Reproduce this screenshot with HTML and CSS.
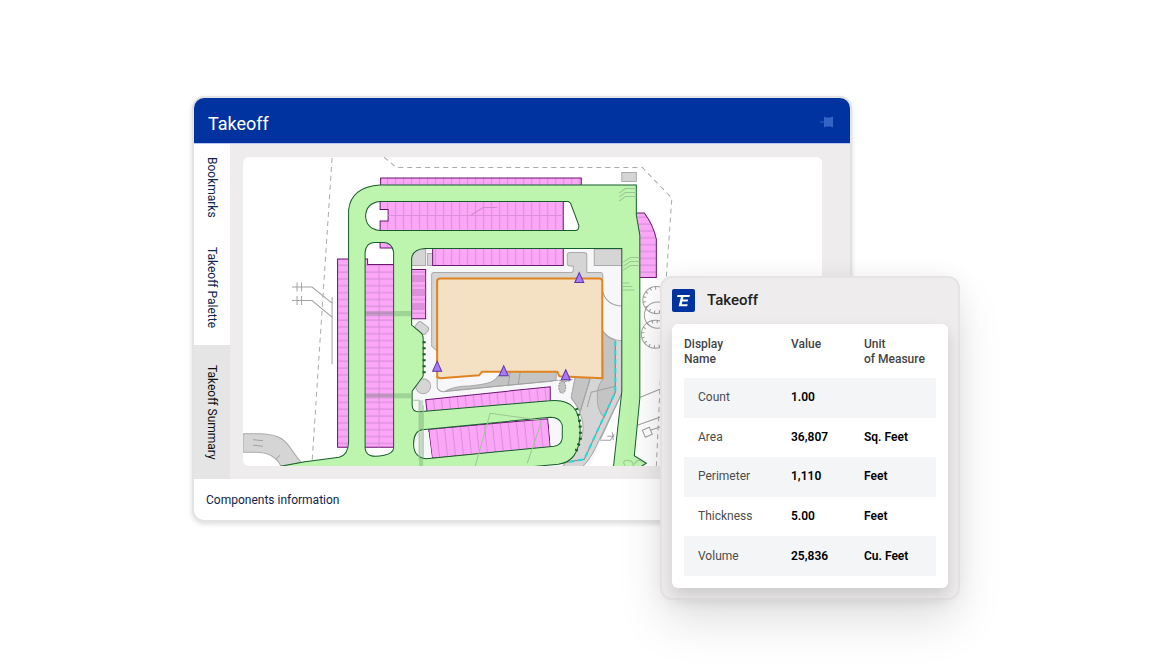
FILE: index.html
```html
<!DOCTYPE html>
<html lang="en">
<head>
<meta charset="utf-8">
<title>Takeoff</title>
<link rel="stylesheet" href="styles.css">
</head>
<body>
<main class="stage">
  <section class="window">
    <header class="titlebar">
      <h1 class="title">Takeoff</h1>
      <button class="pin" aria-label="Pin panel">
        <svg viewBox="0 0 14 12" width="14" height="12"><path d="M0 5.500h4V.5l2 1h4l3-1v11l-3-1H6l-2 1V6.500H0z"/></svg>
      </button>
    </header>
    <div class="workspace">
      <nav class="tabs">
        <button class="tab tab-bookmarks">Bookmarks</button>
        <button class="tab tab-palette">Takeoff Palette</button>
        <button class="tab tab-summary">Takeoff Summary</button>
      </nav>
      <div class="canvas">
        <svg class="plan" viewBox="243 157 579 309" preserveAspectRatio="xMinYMin slice" role="img" aria-label="Site plan">
          <defs>
            <pattern id="cols" x="380" y="0" width="8" height="60" patternUnits="userSpaceOnUse"><path class="stall-bg" d="M0 0h8v60H0z"/><path class="stall-line" d="M7.500 0v60"/></pattern>
            <pattern id="rows" x="0" y="266" width="60" height="6.850" patternUnits="userSpaceOnUse"><path class="stall-bg" d="M0 0h60v7H0z"/><path class="stall-line" d="M0 6h60"/></pattern>
            <pattern id="slant" x="429" y="0" width="8" height="60" patternUnits="userSpaceOnUse" patternTransform="rotate(-6 429 430)"><path class="stall-bg" d="M0 0h8v60H0z"/><path class="stall-line" d="M7.500 0v60"/></pattern>
          </defs>

          <!-- property boundary and utilities -->
          <g class="boundary">
            <path d="M332 158L312 462"/>
            <path d="M384 157L396 167.500H642L671.500 198L666 277M660 380L656 466"/>
          </g>
          <g class="line">
            <path d="M292 287H312L332 303M292 300.500H312L332 317M332 297V364M297 282.500v9M301.500 282.500v9M297 296v9M301.500 296v9"/>
            <path d="M640 397L662 388M637 425L662 416M650 430L662 426"/>
            <path d="M642 430l7-3 3 7-7 3z"/>
            <circle cx="656" cy="300" r="13.500"/><circle cx="657" cy="315" r="13"/><circle cx="655" cy="334" r="14"/>
          </g>
          <g class="ticks"><circle cx="656" cy="300" r="12"/><circle cx="655" cy="334" r="12.500"/></g>
          <path class="paved" d="M243 433.500H260C288 434 287 446 301 462L281 466C276 456 267 452 256 452H243z"/>
          <path class="line" d="M253 439.500l10 1M253 445l10 1M276 459l4-4"/>
          <path class="paved" d="M621.500 172.500h14.500v9h-14.500z"/>

          <!-- building island -->
          <path class="island" d="M411 248H622V392L590 466H540L580 440 575 402 411 412z"/>
          <path class="paved" d="M411 249h14.500v16.500H411zM427.500 253.500H433v12h-5.500zM594 249h28v16.500h-28z"/>
          <path class="paved" d="M437 351L431.500 346V275Q431.500 272.500 434 272.500H571Q573 272.500 573 270V266H570Q567 266 567 263V255Q567 252.500 570 252.500H583.500Q586.500 252.500 586.500 255V272.500H600Q602.500 272.500 602.500 276V280H437z"/>
          <path class="paved" d="M602 330Q608 340 622 340.500V392L593 452Q586 465 577 470H560L580 440C588 424 577 405 571 398L575 376H602z"/>
          <path class="paved-dark" d="M602 330Q607 338 615 340V392L604 417Q596 410 597 394Q597 386 603 378z"/>
          <path class="paved-dark" d="M575 377L590 378L580 411L571 397z"/>
          <path class="paved-dark" d="M445 391Q449 388 462 386Q492 385 497 377L503 371H556V378Q556 380 551 381z"/>
          <path class="line" d="M437 377V387Q438 391 443 391.500L558 380M508 385l2-13M518 384l2-12M602 290Q605 305 622 306M587 407L591 392L615 386"/>
          <path class="line" d="M622 392L600 439M600 440h10l4-6M607 436l7 0M612 432l1 8M590 378l-10 33"/>
          <circle class="paved" cx="423" cy="386" r="7.500"/>
          <rect class="paved" x="415" y="323" width="13" height="9" rx="3" transform="rotate(38 421 328)"/>
          <ellipse class="shrub" cx="562" cy="387" rx="3.500" ry="6"/>
          <path class="shrub" d="M559 380q8 3 13-1"/>
          <path class="water-base" d="M615 341V392L584 459L566 462"/>
          <path class="water" d="M615 341V392L584 459L566 462"/>

          <!-- parking -->
          <path fill="url(#cols)" class="parking" d="M380.500 178H581V187H380.500zM380 200H563V232H380V221H388V209.500H380zM380 239h13v9h-13zM432.500 248H563V265.500H432.500z"/>
          <path class="stall-line" d="M388 215.500H563"/>
          <path class="stall-light" d="M471 215L483 207.500H497"/>
          <path fill="url(#rows)" class="parking" d="M337.500 259H367.500V264.500H394V447H337.500zM411 269.500H425.500V318.500H411zM635 213H644Q653 225 656 239V277.500H637z"/>
          <path class="stall-line" d="M379 265V447"/>
          <path class="shade" d="M412 275h13v7h-13zM412 289h13v7h-13zM412 303h13v7h-13z"/>
          <path fill="url(#slant)" class="parking" d="M425.500 399.500L550 386.500V401L427 412zM428.500 429L547.500 418.500L550 447L432 458z"/>
          <path class="end-cap" d="M412 432h16.500L432 459H414zM548 416h16v30h-13.500z"/>

          <!-- driveway -->
          <path class="road" fill-rule="evenodd" d="M270 468L305 461.500L339 457Q348 455 348.500 442V210Q351 187 380 185H636V215L639.500 235V398L634 455.500L646 463L638 468H613L621.500 391V248.500H425Q413 249 411.500 258V325L420 332Q423 334 423 338V376L412 391V405Q412 411.500 419 411.500L549 400.500C572 398 580 410 580 432C579 453 572 462 558 464L515 468z
            M380 201.500H567Q570 201.500 571 205L578.500 225Q579 230.500 575 230.500H380Q366 229 365.500 216Q366 203 380 201.500z
            M365 252Q366 243 374 242.500H384Q392 243 393.500 252V448Q393 453 384 455Q366 459 365 448z
            M422 429.500L550 417Q560 417 562 425V438Q561 445 554 446L426 458.500Q414 457 413.500 445Q413 431 422 429.500z"/>
          <path class="crossing" d="M365 311h46v5h-46zM365 393h46v5h-46zM419 400h4v66h-4z"/>
          <path class="curb" d="M413 400h6v60M423 405v52M475 466L490 413L541 420M527 463L541 422"/>
          <path class="curb" d="M619 193L625 188.500H636M619 197L625 192.500H636M619 201L625 196.500H636M623 262L630 257.500H639M623 266L630 261.500H639M623 270L630 265.500H639M622 283h7M622 286.500h10M622 290h12M625 466q-4-6 2-6t6 6M634 464q4-7 8-2"/>
          <path class="bushes" d="M424 341V374M576 408Q581 420 580 440L575 453"/>

          <!-- building -->
          <path class="building" d="M440 278.500H599Q602 278.500 602 281.500V378L559 376L557 371.500H482L479 375L440 378L437 377V281.500Q437 278.500 440 278.500z"/>
          <path class="marker" d="M579 272.500l4.500 10h-9zM437 361l4.500 10h-9zM503.500 365.500l4.500 10h-9zM565.500 369.500l4.500 10h-9z"/>
        </svg>
      </div>
    </div>
    <footer class="statusbar">Components information</footer>
  </section>

  <section class="card">
    <header class="card-head">
      <svg class="logo" viewBox="0 0 23 23" width="23" height="23" aria-hidden="true"><rect width="23" height="23" rx="2"/><path d="M5.500 6H18l-.5 2H11.500l-.6 2.500h5.200l-.5 2h-5.200l-.7 2.700h6l-.5 2H6.700L8.900 8H5z"/></svg>
      <h2 class="card-title">Takeoff</h2>
    </header>
    <div class="sheet">
      <table class="measures">
        <thead><tr><th class="name">Display<br>Name</th><th class="value">Value</th><th>Unit<br>of Measure</th></tr></thead>
        <tbody>
          <tr><td>Count</td><td>1.00</td><td></td></tr>
          <tr><td>Area</td><td>36,807</td><td>Sq. Feet</td></tr>
          <tr><td>Perimeter</td><td>1,110</td><td>Feet</td></tr>
          <tr><td>Thickness</td><td>5.00</td><td>Feet</td></tr>
          <tr><td>Volume</td><td>25,836</td><td>Cu. Feet</td></tr>
        </tbody>
      </table>
    </div>
  </section>
</main>
</body>
</html>
```
FILE: styles.css
```css
* { box-sizing: border-box; }
body { margin: 0; background: #fff; font-family: Roboto, "Liberation Sans", sans-serif; }
button { border: 0; padding: 0; background: none; font: inherit; color: inherit; cursor: pointer; }

.stage {
  display: grid;
  grid-template-columns: minmax(0, 768px);
  justify-content: center;
  align-items: start;
  min-height: 100vh;
  padding-top: 96px;
}

.window {
  grid-area: 1 / 1;
  width: 86%;
  border: 2px solid #e3e3e6;
  border-radius: 12px;
  overflow: hidden;
  background: #fff;
  box-shadow: 0 2px 5px rgba(0, 0, 0, .14);
}
.titlebar {
  display: flex;
  align-items: center;
  justify-content: space-between;
  height: 46px;
  padding: 6px 16px 0 14px;
  background: #0033a0;
  border-bottom: 1px solid #b5c7ee;
  color: #fff;
}
.title { margin: 0; font-size: 18px; line-height: 24px; font-weight: 400; }
.pin { display: flex; margin-bottom: 4px; }
.pin path { fill: #3464c4; }

.workspace { display: flex; background: #eeeced; }
.tabs { display: flex; flex-direction: column; width: 36px; background: #fff; color: #10254f; }
.tab { writing-mode: vertical-rl; width: 36px; font-size: 12px; line-height: 36px; text-align: left; }
.tab-bookmarks { padding-top: 13px; height: 88px; }
.tab-palette { padding-top: 15px; height: 113px; }
.tab-summary { flex: 1; padding-top: 20px; background: #e5e5e5; color: #111; }
.canvas { flex: 1; min-width: 0; padding: 13px 28px 13px 13px; }
.plan { display: block; width: 100%; height: auto; border-radius: 6px; background: #fff; }
.statusbar { padding: 9px 12px 8px; font-size: 12px; line-height: 24px; color: #10254f; }

.boundary { fill: none; stroke: #aaa; stroke-width: 1; stroke-dasharray: 5 4; }
.line { fill: none; stroke: #a2a2a2; stroke-width: 1; }
.ticks { fill: none; stroke: #999; stroke-width: 3; stroke-dasharray: 1 4; }
.paved { fill: #d5d5d5; stroke: #aaa; }
.paved-dark { fill: #c4c4c4; stroke: #aaa; stroke-width: 1; }
.island { fill: #f7f7f9; }
.end-cap { fill: #f7f7f9; }
.shrub { fill: #c4c4c4; stroke: #999; stroke-dasharray: 2 1; }
.stall-bg { fill: #fba6f7; }
.stall-line { fill: none; stroke: #da8edb; stroke-width: 1; }
.stall-light { fill: none; stroke: #cf8acf; }
.shade { fill: #e08fdd; }
.parking { stroke: #6a1570; stroke-width: 1; }
.road { fill: #bdf4ae; stroke: #175c2b; stroke-width: 1; }
.crossing { fill: #417d48; fill-opacity: .25; }
.curb { fill: none; stroke: #9cc694; stroke-width: 1; }
.bushes { fill: none; stroke: #175c2b; stroke-width: 3; stroke-dasharray: 2 4; }
.water-base { fill: none; stroke: #888; }
.water { fill: none; stroke: #22dada; stroke-width: 2; stroke-dasharray: 5 4; }
.building { fill: #f4e1c4; stroke: #df8420; stroke-width: 2; stroke-linejoin: round; }
.marker { fill: #a97af5; stroke: #5d35a5; stroke-width: 1; }

.card {
  grid-area: 1 / 1;
  justify-self: end;
  position: relative;
  margin-top: 180px;
  width: 300px;
  padding: 10px;
  border: 2px solid #e5e3e4;
  border-radius: 12px;
  background: #eeeced;
  box-shadow: 0 24px 48px -4px rgba(0, 0, 0, .13), 0 0 24px rgba(0, 0, 0, .05);
}
.card-head { display: flex; align-items: center; gap: 12px; height: 36px; padding-bottom: 12px; }
.logo rect { fill: #0033a0; }
.logo path { fill: #fff; }
.card-title { margin: 0; font-size: 15px; line-height: 24px; font-weight: 500; color: #222; }
.sheet { padding: 0 12px 12px; border-radius: 6px; background: #fff; box-shadow: 0 8px 16px rgba(0, 0, 0, .14); }

.measures { width: 100%; height: 252px; border-collapse: collapse; table-layout: fixed; font-size: 12px; line-height: 15px; text-align: left; }
.measures th { height: 54px; padding: 13px 0 11px; vertical-align: top; font-weight: 500; color: #444; }
.name { width: 107px; }
.value { width: 73px; }
.measures td { padding: 12px 0; font-weight: 600; color: #000; }
.measures td:first-child { padding-left: 14px; font-weight: 400; color: #4c4c4c; }
.measures tbody tr:nth-child(odd) { background: #f4f5f7; }
```
